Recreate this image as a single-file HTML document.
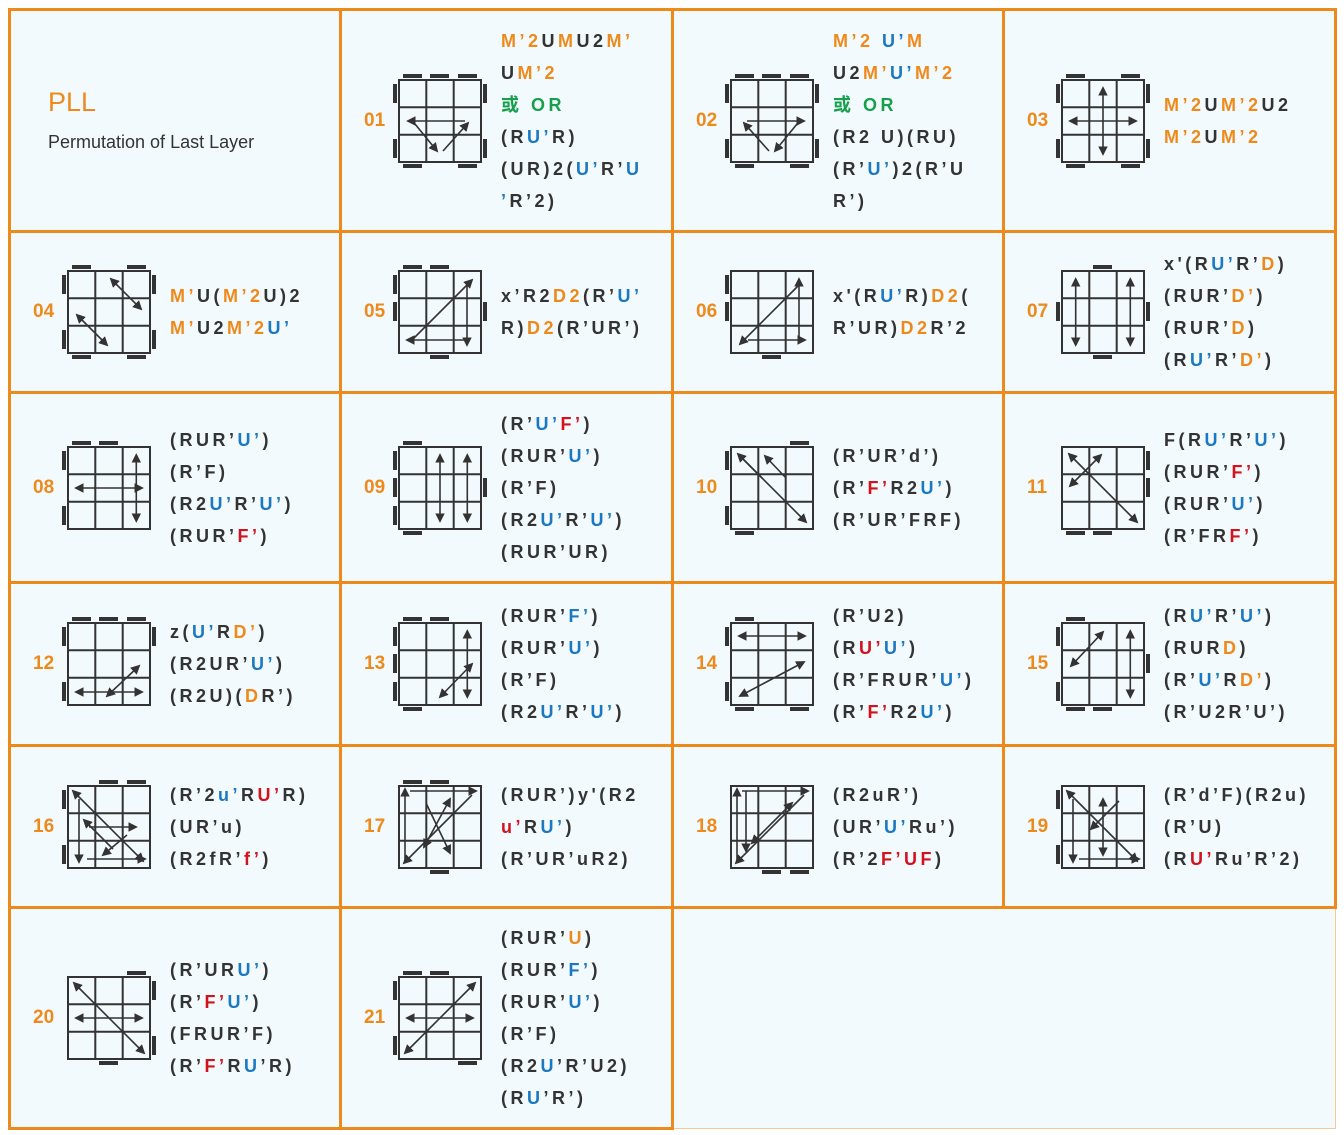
<!DOCTYPE html>
<html><head><meta charset="utf-8">
<style>
body{margin:0;width:1344px;height:1135px;background:#fff;position:relative;overflow:hidden;font-family:"Liberation Sans","Noto Sans CJK SC",sans-serif}
.bg{position:absolute;background:#ee8a1b}
.c{position:absolute;background:#f2fafd}
.n{position:absolute;left:22px;top:50%;transform:translateY(-50%);color:#ee8a1b;font-weight:bold;font-size:19px}
.c svg{position:absolute;left:48px;top:calc(50% - 50px);width:100px;height:100px}
.t{position:absolute;left:159px;top:50%;transform:translateY(-50%);line-height:32px;font-size:18px;font-weight:bold;letter-spacing:3.5px;color:#333;white-space:nowrap}
.o{color:#ee8a1b}.b{color:#1b78c2}.g{color:#16a04b}.r{color:#d4121e}
line{stroke:#333;stroke-width:1.6}
.e{marker-end:url(#a)}
.d{marker-end:url(#a);marker-start:url(#a)}
rect.k{fill:#333}
</style></head><body>
<svg width="0" height="0" style="position:absolute"><defs>
<marker id="a" viewBox="0 0 10 10" refX="8" refY="5" markerWidth="6" markerHeight="6" orient="auto-start-reverse"><path d="M0,0L10,5L0,10z" fill="#333"/></marker>
<g id="gr" fill="none" stroke="#333" stroke-width="2"><rect x="9" y="9" width="82" height="82"/><path d="M36.3 9V91M63.7 9V91M9 36.3H91M9 63.7H91"/></g>
</defs></svg>

<div class="bg" style="left:8px;top:8px;width:1329px;height:901px"></div>
<div class="bg" style="left:8px;top:906px;width:666px;height:224px"></div>
<div class="c" style="left:674px;top:909px;width:662px;height:220px;border-right:1px solid #f5c89a;border-bottom:1px solid #f5c89a;box-sizing:border-box"></div>

<!-- row 1 -->
<div class="c" style="left:11px;top:11px;width:328px;height:219px">
<div style="position:absolute;left:37px;top:76px;font-size:27px;color:#ee8a1b">PLL</div>
<div style="position:absolute;left:37px;top:121px;font-size:18px;color:#333">Permutation of Last Layer</div>
</div>
<div class="c" style="left:342px;top:11px;width:329px;height:219px"><span class="n">01</span>
<svg viewBox="0 0 100 100"><use href="#gr"/><rect class="k" x="13" y="3" width="19" height="4"/><rect class="k" x="40" y="3" width="19" height="4"/><rect class="k" x="68" y="3" width="19" height="4"/><rect class="k" x="13" y="93" width="19" height="4"/><rect class="k" x="68" y="93" width="19" height="4"/><rect class="k" x="3" y="13" width="4" height="19"/><rect class="k" x="3" y="68" width="4" height="19"/><rect class="k" x="93" y="13" width="4" height="19"/><rect class="k" x="93" y="68" width="4" height="19"/>
<line class="e" x1="75" y1="50" x2="18" y2="50"/><line class="e" x1="25" y1="53" x2="47" y2="80"/><line class="e" x1="53" y1="80" x2="78" y2="52"/></svg>
<div class="t"><span class="o">M’2</span>U<span class="o">M</span>U2<span class="o">M’</span><br>U<span class="o">M’2</span><br><span class="g">或 OR</span><br>(R<span class="b">U’</span>R)<br>(UR)2(<span class="b">U’</span>R’<span class="b">U</span><br><span class="b">’</span>R’2)</div></div>
<div class="c" style="left:674px;top:11px;width:328px;height:219px"><span class="n">02</span>
<svg viewBox="0 0 100 100"><use href="#gr"/><rect class="k" x="13" y="3" width="19" height="4"/><rect class="k" x="40" y="3" width="19" height="4"/><rect class="k" x="68" y="3" width="19" height="4"/><rect class="k" x="13" y="93" width="19" height="4"/><rect class="k" x="68" y="93" width="19" height="4"/><rect class="k" x="3" y="13" width="4" height="19"/><rect class="k" x="3" y="68" width="4" height="19"/><rect class="k" x="93" y="13" width="4" height="19"/><rect class="k" x="93" y="68" width="4" height="19"/>
<line class="e" x1="25" y1="50" x2="82" y2="50"/><line class="e" x1="75" y1="53" x2="53" y2="80"/><line class="e" x1="47" y1="80" x2="22" y2="52"/></svg>
<div class="t"><span class="o">M’2 </span><span class="b">U’</span><span class="o">M</span><br>U2<span class="o">M’</span><span class="b">U’</span><span class="o">M’2</span><br><span class="g">或 OR</span><br>(R2 U)(RU)<br>(R’<span class="b">U’</span>)2(R’U<br>R’)</div></div>
<div class="c" style="left:1005px;top:11px;width:329px;height:219px"><span class="n">03</span>
<svg viewBox="0 0 100 100"><use href="#gr"/><rect class="k" x="13" y="3" width="19" height="4"/><rect class="k" x="68" y="3" width="19" height="4"/><rect class="k" x="13" y="93" width="19" height="4"/><rect class="k" x="68" y="93" width="19" height="4"/><rect class="k" x="3" y="13" width="4" height="19"/><rect class="k" x="3" y="68" width="4" height="19"/><rect class="k" x="93" y="13" width="4" height="19"/><rect class="k" x="93" y="68" width="4" height="19"/>
<line class="d" x1="50" y1="17" x2="50" y2="83"/><line class="d" x1="17" y1="50" x2="83" y2="50"/></svg>
<div class="t"><span class="o">M’2</span>U<span class="o">M’2</span>U2<br><span class="o">M’2</span>U<span class="o">M’2</span></div></div>

<!-- row 2 -->
<div class="c" style="left:11px;top:233px;width:328px;height:158px"><span class="n">04</span>
<svg viewBox="0 0 100 100"><use href="#gr"/><rect class="k" x="13" y="3" width="19" height="4"/><rect class="k" x="68" y="3" width="19" height="4"/><rect class="k" x="13" y="93" width="19" height="4"/><rect class="k" x="68" y="93" width="19" height="4"/><rect class="k" x="3" y="13" width="4" height="19"/><rect class="k" x="3" y="68" width="4" height="19"/><rect class="k" x="93" y="13" width="4" height="19"/><rect class="k" x="93" y="68" width="4" height="19"/>
<line class="d" x1="52" y1="17" x2="82" y2="47"/><line class="d" x1="18" y1="53" x2="48" y2="83"/></svg>
<div class="t"><span class="o">M’</span>U(<span class="o">M’2</span>U)2<br><span class="o">M’</span>U2<span class="o">M’2</span><span class="b">U’</span></div></div>
<div class="c" style="left:342px;top:233px;width:329px;height:158px"><span class="n">05</span>
<svg viewBox="0 0 100 100"><use href="#gr"/><rect class="k" x="13" y="3" width="19" height="4"/><rect class="k" x="40" y="3" width="19" height="4"/><rect class="k" x="40" y="93" width="19" height="4"/><rect class="k" x="3" y="13" width="4" height="19"/><rect class="k" x="3" y="40" width="4" height="19"/><rect class="k" x="93" y="40" width="4" height="19"/>
<line class="e" x1="24" y1="76" x2="82" y2="18"/><line class="e" x1="77" y1="22" x2="77" y2="83"/><line class="e" x1="74" y1="78" x2="17" y2="78"/></svg>
<div class="t">x’R2<span class="o">D2</span>(R’<span class="b">U’</span><br>R)<span class="o">D2</span>(R’UR’)</div></div>
<div class="c" style="left:674px;top:233px;width:328px;height:158px"><span class="n">06</span>
<svg viewBox="0 0 100 100"><use href="#gr"/><rect class="k" x="40" y="93" width="19" height="4"/><rect class="k" x="3" y="13" width="4" height="19"/><rect class="k" x="3" y="40" width="4" height="19"/>
<line class="e" x1="76" y1="24" x2="18" y2="82"/><line class="e" x1="77" y1="78" x2="77" y2="17"/><line class="e" x1="26" y1="78" x2="83" y2="78"/></svg>
<div class="t">x'(R<span class="b">U’</span>R)<span class="o">D2</span>(<br>R’UR)<span class="o">D2</span>R’2</div></div>
<div class="c" style="left:1005px;top:233px;width:329px;height:158px"><span class="n">07</span>
<svg viewBox="0 0 100 100"><use href="#gr"/><rect class="k" x="40" y="3" width="19" height="4"/><rect class="k" x="40" y="93" width="19" height="4"/><rect class="k" x="3" y="40" width="4" height="19"/><rect class="k" x="93" y="40" width="4" height="19"/>
<line class="d" x1="22.7" y1="17" x2="22.7" y2="83"/><line class="d" x1="77.3" y1="17" x2="77.3" y2="83"/></svg>
<div class="t">x'(R<span class="b">U’</span>R’<span class="o">D</span>)<br>(RUR’<span class="o">D’</span>)<br>(RUR’<span class="o">D</span>)<br>(R<span class="b">U’</span>R’<span class="o">D’</span>)</div></div>

<!-- row 3 -->
<div class="c" style="left:11px;top:394px;width:328px;height:187px"><span class="n">08</span>
<svg viewBox="0 0 100 100"><use href="#gr"/><rect class="k" x="13" y="3" width="19" height="4"/><rect class="k" x="40" y="3" width="19" height="4"/><rect class="k" x="3" y="13" width="4" height="19"/><rect class="k" x="3" y="68" width="4" height="19"/>
<line class="d" x1="17" y1="50" x2="83" y2="50"/><line class="d" x1="77.3" y1="17" x2="77.3" y2="83"/></svg>
<div class="t">(RUR’<span class="b">U’</span>)<br>(R’F)<br>(R2<span class="b">U’</span>R’<span class="b">U’</span>)<br>(RUR’<span class="r">F’</span>)</div></div>
<div class="c" style="left:342px;top:394px;width:329px;height:187px"><span class="n">09</span>
<svg viewBox="0 0 100 100"><use href="#gr"/><rect class="k" x="13" y="3" width="19" height="4"/><rect class="k" x="13" y="93" width="19" height="4"/><rect class="k" x="3" y="13" width="4" height="19"/><rect class="k" x="3" y="40" width="4" height="19"/><rect class="k" x="3" y="68" width="4" height="19"/><rect class="k" x="93" y="40" width="4" height="19"/>
<line class="d" x1="50" y1="17" x2="50" y2="83"/><line class="d" x1="77.3" y1="17" x2="77.3" y2="83"/></svg>
<div class="t">(R’<span class="b">U’</span><span class="r">F’</span>)<br>(RUR’<span class="b">U’</span>)<br>(R’F)<br>(R2<span class="b">U’</span>R’<span class="b">U’</span>)<br>(RUR’UR)</div></div>
<div class="c" style="left:674px;top:394px;width:328px;height:187px"><span class="n">10</span>
<svg viewBox="0 0 100 100"><use href="#gr"/><rect class="k" x="68" y="3" width="19" height="4"/><rect class="k" x="13" y="93" width="19" height="4"/><rect class="k" x="3" y="13" width="4" height="19"/><rect class="k" x="3" y="68" width="4" height="19"/>
<line class="e" x1="40" y1="40" x2="16" y2="16"/><line class="e" x1="64" y1="40" x2="43" y2="18"/><line class="e" x1="22" y1="22" x2="84" y2="84"/></svg>
<div class="t">(R’UR’d’)<br>(R’<span class="r">F’</span>R2<span class="b">U’</span>)<br>(R’UR’FRF)</div></div>
<div class="c" style="left:1005px;top:394px;width:329px;height:187px"><span class="n">11</span>
<svg viewBox="0 0 100 100"><use href="#gr"/><rect class="k" x="13" y="93" width="19" height="4"/><rect class="k" x="40" y="93" width="19" height="4"/><rect class="k" x="93" y="13" width="4" height="19"/><rect class="k" x="93" y="40" width="4" height="19"/>
<line class="d" x1="16" y1="16" x2="84" y2="84"/><line class="d" x1="48" y1="17" x2="17" y2="48"/></svg>
<div class="t">F(R<span class="b">U’</span>R’<span class="b">U’</span>)<br>(RUR’<span class="r">F’</span>)<br>(RUR’<span class="b">U’</span>)<br>(R’FR<span class="r">F’</span>)</div></div>

<!-- row 4 -->
<div class="c" style="left:11px;top:584px;width:328px;height:160px"><span class="n">12</span>
<svg viewBox="0 0 100 100"><use href="#gr"/><rect class="k" x="13" y="3" width="19" height="4"/><rect class="k" x="40" y="3" width="19" height="4"/><rect class="k" x="68" y="3" width="19" height="4"/><rect class="k" x="3" y="13" width="4" height="19"/><rect class="k" x="3" y="68" width="4" height="19"/><rect class="k" x="93" y="13" width="4" height="19"/>
<line class="d" x1="17" y1="78" x2="83" y2="78"/><line class="d" x1="48" y1="82" x2="80" y2="52"/></svg>
<div class="t">z(<span class="b">U’</span>R<span class="o">D’</span>)<br>(R2UR’<span class="b">U’</span>)<br>(R2U)(<span class="o">D</span>R’)</div></div>
<div class="c" style="left:342px;top:584px;width:329px;height:160px"><span class="n">13</span>
<svg viewBox="0 0 100 100"><use href="#gr"/><rect class="k" x="13" y="3" width="19" height="4"/><rect class="k" x="40" y="3" width="19" height="4"/><rect class="k" x="13" y="93" width="19" height="4"/><rect class="k" x="3" y="13" width="4" height="19"/><rect class="k" x="3" y="40" width="4" height="19"/><rect class="k" x="3" y="68" width="4" height="19"/>
<line class="d" x1="77.3" y1="17" x2="77.3" y2="83"/><line class="d" x1="50" y1="83" x2="82" y2="50"/></svg>
<div class="t">(RUR’<span class="b">F’</span>)<br>(RUR’<span class="b">U’</span>)<br>(R’F)<br>(R2<span class="b">U’</span>R’<span class="b">U’</span>)</div></div>
<div class="c" style="left:674px;top:584px;width:328px;height:160px"><span class="n">14</span>
<svg viewBox="0 0 100 100"><use href="#gr"/><rect class="k" x="13" y="3" width="19" height="4"/><rect class="k" x="13" y="93" width="19" height="4"/><rect class="k" x="68" y="93" width="19" height="4"/><rect class="k" x="3" y="13" width="4" height="19"/><rect class="k" x="3" y="68" width="4" height="19"/>
<line class="d" x1="17" y1="22" x2="83" y2="22"/><line class="d" x1="18" y1="82" x2="82" y2="48"/></svg>
<div class="t">(R’U2)<br>(R<span class="r">U’</span><span class="b">U’</span>)<br>(R’FRUR’<span class="b">U’</span>)<br>(R’<span class="r">F’</span>R2<span class="b">U’</span>)</div></div>
<div class="c" style="left:1005px;top:584px;width:329px;height:160px"><span class="n">15</span>
<svg viewBox="0 0 100 100"><use href="#gr"/><rect class="k" x="13" y="3" width="19" height="4"/><rect class="k" x="13" y="93" width="19" height="4"/><rect class="k" x="40" y="93" width="19" height="4"/><rect class="k" x="3" y="13" width="4" height="19"/><rect class="k" x="3" y="68" width="4" height="19"/><rect class="k" x="93" y="40" width="4" height="19"/>
<line class="d" x1="18" y1="52" x2="50" y2="18"/><line class="d" x1="77.3" y1="17" x2="77.3" y2="83"/></svg>
<div class="t">(R<span class="b">U’</span>R’<span class="b">U’</span>)<br>(RUR<span class="o">D</span>)<br>(R’<span class="b">U’</span>R<span class="o">D’</span>)<br>(R’U2R’U’)</div></div>

<!-- row 5 -->
<div class="c" style="left:11px;top:747px;width:328px;height:159px"><span class="n">16</span>
<svg viewBox="0 0 100 100"><use href="#gr"/><rect class="k" x="40" y="3" width="19" height="4"/><rect class="k" x="68" y="3" width="19" height="4"/><rect class="k" x="3" y="13" width="4" height="19"/><rect class="k" x="3" y="68" width="4" height="19"/>
<line class="d" x1="14" y1="14" x2="84" y2="84"/><line class="e" x1="20" y1="22" x2="20" y2="85"/><line class="e" x1="28" y1="82" x2="86" y2="82"/><line class="e" x1="30" y1="50" x2="77" y2="50"/><line class="e" x1="54" y1="72" x2="25" y2="43"/><line class="e" x1="68" y1="58" x2="44" y2="78"/></svg>
<div class="t">(R’2<span class="b">u’</span>R<span class="r">U’</span>R)<br>(UR’u)<br>(R2fR’<span class="r">f’</span>)</div></div>
<div class="c" style="left:342px;top:747px;width:329px;height:159px"><span class="n">17</span>
<svg viewBox="0 0 100 100"><use href="#gr"/><rect class="k" x="13" y="3" width="19" height="4"/><rect class="k" x="40" y="3" width="19" height="4"/><rect class="k" x="40" y="93" width="19" height="4"/>
<line class="e" x1="15" y1="84" x2="15" y2="12"/><line class="e" x1="20" y1="14" x2="86" y2="14"/><line class="e" x1="82" y1="18" x2="14" y2="86"/><line class="d" x1="60" y1="22" x2="34" y2="70"/><line class="e" x1="36" y1="26" x2="60" y2="76"/></svg>
<div class="t">(RUR’)y'(R2<br><span class="r">u’</span>R<span class="b">U’</span>)<br>(R’UR’uR2)</div></div>
<div class="c" style="left:674px;top:747px;width:328px;height:159px"><span class="n">18</span>
<svg viewBox="0 0 100 100"><use href="#gr"/><rect class="k" x="40" y="93" width="19" height="4"/><rect class="k" x="68" y="93" width="19" height="4"/>
<line class="e" x1="15" y1="84" x2="15" y2="12"/><line class="e" x1="20" y1="14" x2="86" y2="14"/><line class="e" x1="82" y1="18" x2="14" y2="86"/><line class="d" x1="70" y1="26" x2="30" y2="66"/><line class="e" x1="24" y1="14" x2="24" y2="74"/></svg>
<div class="t">(R2uR’)<br>(UR’<span class="b">U’</span>Ru’)<br>(R’2<span class="r">F’UF</span>)</div></div>
<div class="c" style="left:1005px;top:747px;width:329px;height:159px"><span class="n">19</span>
<svg viewBox="0 0 100 100"><use href="#gr"/><rect class="k" x="3" y="13" width="4" height="19"/><rect class="k" x="3" y="68" width="4" height="19"/>
<line class="d" x1="14" y1="14" x2="84" y2="84"/><line class="e" x1="20" y1="22" x2="20" y2="85"/><line class="e" x1="26" y1="82" x2="86" y2="82"/><line class="d" x1="50" y1="22" x2="50" y2="78"/><line class="e" x1="66" y1="24" x2="38" y2="52"/></svg>
<div class="t">(R’d’F)(R2u)<br>(R’U)<br>(R<span class="r">U’</span>Ru’R’2)</div></div>

<!-- row 6 -->
<div class="c" style="left:11px;top:909px;width:328px;height:218px"><span class="n">20</span>
<svg viewBox="0 0 100 100"><use href="#gr"/><rect class="k" x="68" y="3" width="19" height="4"/><rect class="k" x="40" y="93" width="19" height="4"/><rect class="k" x="93" y="13" width="4" height="19"/><rect class="k" x="93" y="68" width="4" height="19"/>
<line class="d" x1="17" y1="50" x2="83" y2="50"/><line class="d" x1="15" y1="15" x2="85" y2="85"/></svg>
<div class="t">(R’UR<span class="b">U’</span>)<br>(R’<span class="r">F’</span><span class="b">U’</span>)<br>(FRUR’F)<br>(R’<span class="r">F’</span>R<span class="b">U</span>’R)</div></div>
<div class="c" style="left:342px;top:909px;width:329px;height:218px"><span class="n">21</span>
<svg viewBox="0 0 100 100"><use href="#gr"/><rect class="k" x="13" y="3" width="19" height="4"/><rect class="k" x="40" y="3" width="19" height="4"/><rect class="k" x="68" y="93" width="19" height="4"/><rect class="k" x="3" y="13" width="4" height="19"/><rect class="k" x="3" y="68" width="4" height="19"/>
<line class="d" x1="17" y1="50" x2="83" y2="50"/><line class="d" x1="15" y1="85" x2="85" y2="15"/></svg>
<div class="t">(RUR’<span class="o">U</span>)<br>(RUR’<span class="b">F’</span>)<br>(RUR’<span class="b">U’</span>)<br>(R’F)<br>(R2<span class="b">U</span>’R’U2)<br>(R<span class="b">U</span>’R’)</div></div>
</body></html>
